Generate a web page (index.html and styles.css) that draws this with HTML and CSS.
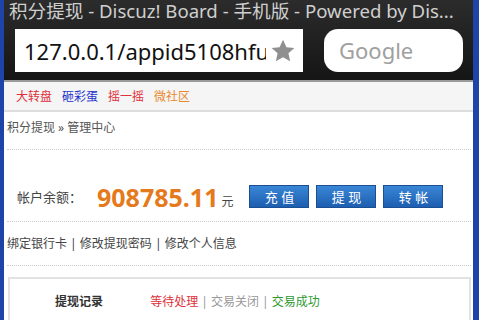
FILE: index.html
```html
<!DOCTYPE html>
<html lang="zh-CN">
  <head>
    <meta charset="UTF-8" />
    <meta name="viewport" content="width=device-width, initial-scale=1.0" />
    <title>积分提现 - Discuz! Board - 手机版</title>
    <link rel="stylesheet" href="styles.css">
  </head>
  <body>
    <div class="frame">
      <div class="chrome">
        <div class="title-bar">积分提现 - Discuz! Board - 手机版 - Powered by Dis...</div>
        <div class="url-row">
          <div class="url-field">
            <span class="url-text">127.0.0.1/appid5108hfu</span>
            <svg class="star" width="26" height="26" viewBox="0 0 24 24">
              <path d="M12 1.5l3.2 7 7.3.7-5.5 4.9 1.6 7.4L12 17.7l-6.6 3.8 1.6-7.4L1.5 9.2l7.3-.7z" fill="#8f8f8f"/>
            </svg>
          </div>
          <div class="search-field">Google</div>
        </div>
      </div>

      <div class="nav">
        <a class="red">大转盘</a>
        <a class="blue">砸彩蛋</a>
        <a class="red">摇一摇</a>
        <a class="orange">微社区</a>
      </div>

      <div class="page">
        <div class="crumb">积分提现 » 管理中心</div>
        <div class="balance">
          <span class="label">帐户余额：</span>
          <span class="amount">908785.11</span>
          <span class="unit">元</span>
          <div class="actions">
            <a class="btn">充 值</a>
            <a class="btn">提 现</a>
            <a class="btn">转 帐</a>
          </div>
        </div>
        <div class="links">绑定银行卡 | 修改提现密码 | 修改个人信息</div>
        <div class="records">
          <span class="records-title">提现记录</span>
          <span class="filter">
            <span class="red">等待处理</span> | 交易关闭 | <span class="green">交易成功</span>
          </span>
        </div>
      </div>
    </div>
  </body>
</html>
```

FILE: styles.css
```css
body {
  margin: 0;
  font-family: "Noto Sans", "Noto Sans CJK SC", sans-serif;
  background: #fff;
  overflow: hidden;
}

.frame {
  height: 320px;
  border-left: 4px solid #1f44a8;
  border-right: 6px solid #1f44a8;
  background: #fff;
  overflow: hidden;
}

/* browser chrome */
.chrome {
  background: linear-gradient(#2c2c2c, #151515);
  height: 82px;
  border-bottom: 2px solid #9a9a9a;
  box-sizing: border-box;
}
.title-bar {
  color: #cfcfcf;
  font-size: 18.6px;
  line-height: 22px;
  padding-left: 5px;
  white-space: nowrap;
}
.url-row {
  display: flex;
  gap: 21px;
  padding: 7px 0 0 11px;
}
.url-field {
  width: 288px;
  height: 43px;
  background: #fff;
  display: flex;
  align-items: center;
  padding-left: 9px;
  box-sizing: border-box;
  overflow: hidden;
}
.url-text {
  font-size: 22px;
  color: #111;
  width: 242px;
  white-space: nowrap;
  overflow: hidden;
}
.star {
  margin-left: 4px;
}
.search-field {
  width: 139px;
  height: 43px;
  background: #fff;
  border-radius: 14px;
  color: #a0a0a0;
  font-size: 22px;
  line-height: 43px;
  padding-left: 15px;
  box-sizing: border-box;
}

/* site nav */
.nav {
  background: #f5f5f5;
  border-bottom: 2px solid #dedede;
  height: 28px;
  display: flex;
  align-items: center;
  gap: 10px;
  padding-left: 12px;
  font-size: 12px;
}
.red { color: #e0303a; }
.blue { color: #2233cc; }
.orange { color: #e8892e; }
.green { color: #2f9a30; }

/* page */
.page {
  padding: 0 2px 0 3px;
  font-size: 12px;
  color: #555;
}
.crumb {
  height: 37px;
  line-height: 32px;
  border-bottom: 1px dotted #ccc;
}
.balance {
  display: flex;
  align-items: center;
  height: 72px;
  padding: 22px 0 0 10px;
  box-sizing: border-box;
  border-bottom: 1px dotted #ccc;
}
.label {
  font-size: 13px;
  color: #444;
  width: 80px;
}
.amount {
  color: #e57a1d;
  font-size: 25px;
  font-weight: bold;
}
.unit {
  font-size: 12px;
  color: #444;
  margin: 8px 0 0 3px;
}
.actions {
  display: flex;
  gap: 7px;
  margin-left: 16px;
}
.btn {
  width: 60px;
  height: 23px;
  line-height: 23px;
  text-align: center;
  color: #fff;
  font-size: 13px;
  background: linear-gradient(#3a86d6, #1d5eb0);
  border: 1px solid #1b4f94;
  box-sizing: border-box;
}
.links {
  height: 43px;
  line-height: 44px;
  border-bottom: 1px dotted #ccc;
  color: #444;
}
.records {
  margin: 11px 0 0 1px;
  border: 2px solid #e2e2e2;
  height: 60px;
  padding: 13px 0 0 45px;
  box-sizing: border-box;
}
.records-title {
  font-weight: bold;
  color: #333;
  display: inline-block;
  width: 92px;
}
.filter {
  color: #999;
}
```
